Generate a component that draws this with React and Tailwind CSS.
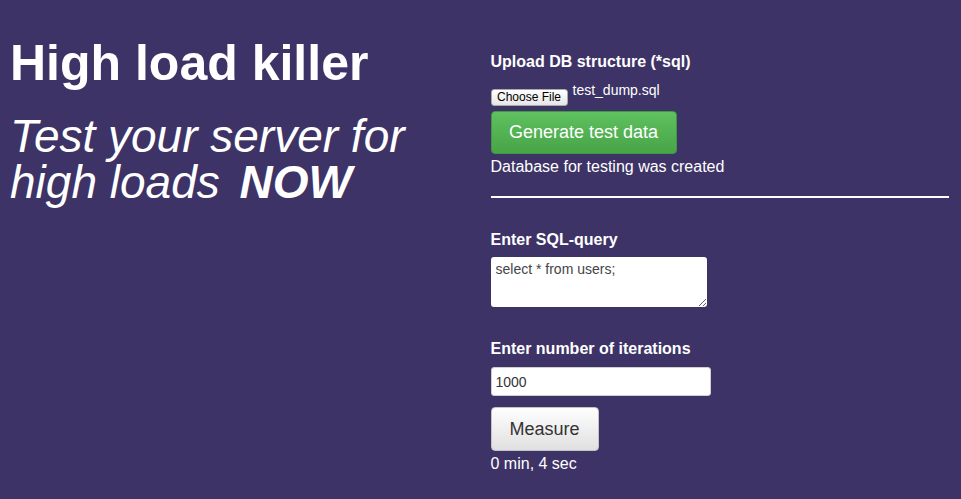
const App = () => {
  return (
    <div className="min-h-[499px] w-full bg-[#3d3366] px-[10px] text-white font-['Liberation_Sans',Arial,sans-serif]">
      <div className="grid grid-cols-2">
        {/* Left: headline */}
        <div className="pt-[35px]">
          <h1 className="text-[50px] font-bold leading-[57px]">High load killer</h1>
          <p className="mt-[21px] text-[46px] italic leading-[46px]">
            Test your server for
            <br />
            high loads <b className="ml-[7px]">NOW</b>
          </p>
        </div>

        {/* Right: form */}
        <div className="pl-[10px] pr-[2px] pt-[52px]">
          <div className="text-[16px] font-bold leading-[19px]">Upload DB structure (*sql)</div>
          <div className="mt-[11px] flex items-start gap-[5px]">
            <button className="mt-[7px] h-[17px] w-[77px] rounded-[3px] border border-[#a9a9a9] bg-gradient-to-b from-white to-[#e6e6e6] text-[12px] leading-[15px] text-black">
              Choose File
            </button>
            <span className="text-[14px] leading-[16px]">test_dump.sql</span>
          </div>
          <button className="mt-[5px] h-[43px] w-[186px] rounded-[4px] border border-[#3f9a3f] bg-gradient-to-b from-[#5fc15f] to-[#47a447] text-[18px] text-white">
            Generate test data
          </button>
          <div className="mt-[3px] text-[16px] leading-[20px]">Database for testing was created</div>
          <div className="mt-[19px] h-[2px] w-full bg-white" />

          <div className="mt-[32px] text-[16px] font-bold leading-[19px]">Enter SQL-query</div>
          <textarea
            className="mt-[8px] block h-[50px] w-[216px] rounded-[3px] bg-white px-[5px] py-[4px] text-[14px] leading-[17px] text-[#444] outline-none"
            defaultValue="select * from users;"
          />

          <div className="mt-[32px] text-[16px] font-bold leading-[19px]">Enter number of iterations</div>
          <input
            className="mt-[9px] block h-[29px] w-[220px] rounded-[3px] border border-[#cfcfcf] bg-white px-[4px] text-[14px] text-[#333] outline-none"
            defaultValue="1000"
          />
          <button className="mt-[11px] h-[44px] w-[108px] rounded-[4px] border border-[#c4c4c4] bg-gradient-to-b from-white to-[#e0e0e0] text-[18px] text-[#333]">
            Measure
          </button>
          <div className="mt-[3px] text-[16px] leading-[20px]">0 min, 4 sec</div>
        </div>
      </div>
    </div>
  );
};

export default App;
